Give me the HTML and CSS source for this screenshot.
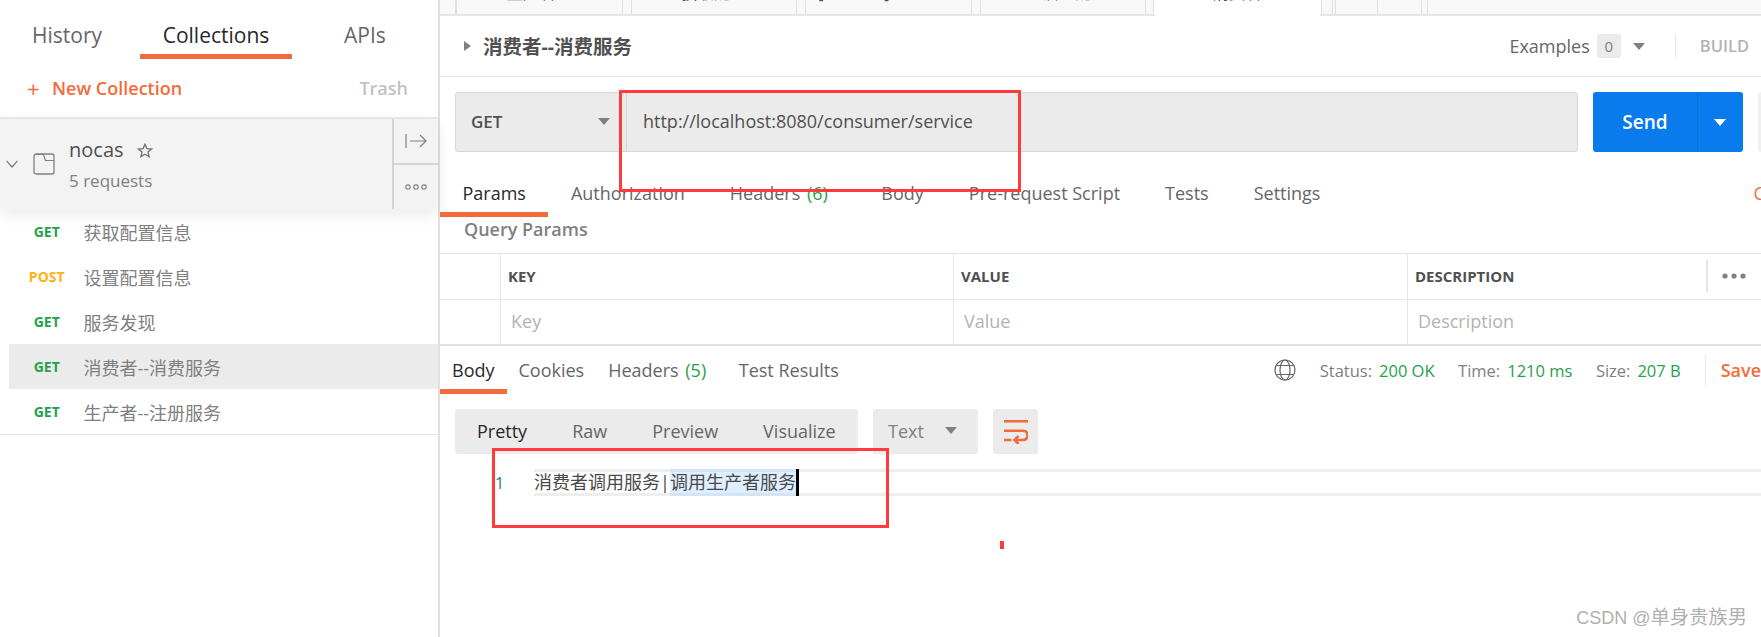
FILE: index.html
```html
<!DOCTYPE html>
<html lang="en">
<head>
    <meta charset="UTF-8">
    <title>Postman - nocas</title>
    <link rel="stylesheet" href="styles.css">
</head>
<body>
    <div class="app">
        <aside class="sidebar">
            <nav class="side-tabs">
                <a class="side-tab side-tab-history">History</a>
                <a class="side-tab side-tab-collections active">Collections</a>
                <a class="side-tab side-tab-apis">APIs</a>
            </nav>
            <div class="side-actions">
                <a class="new-collection"><span class="plus">+</span>New Collection</a>
                <a class="trash">Trash</a>
            </div>
            <div class="collection">
                <svg class="chevron" width="12" height="8" viewBox="0 0 12 8"><path d="M0.5 0.8 6 7 11.5 0.8" fill="none" stroke="#777" stroke-width="1.2"/></svg>
                <svg class="folder" width="22" height="22" viewBox="0 0 22 22"><rect x="1" y="1" width="20" height="20" rx="2" fill="none" stroke="#808080" stroke-width="1.3"/><path d="M3 1.5 10.5 1.5 12.5 7.5 21 7.5" fill="none" stroke="#808080" stroke-width="1.2"/></svg>
                <div class="collection-info">
                    <div class="collection-name">nocas
                        <svg class="star" width="16" height="15" viewBox="0 0 16 15"><path d="M8 1.2 9.9 5.6 14.6 6 11 9.1 12.1 13.7 8 11.3 3.9 13.7 5 9.1 1.4 6 6.1 5.6Z" fill="none" stroke="#707070" stroke-width="1.3"/></svg>
                    </div>
                    <div class="collection-count">5 requests</div>
                </div>
                <div class="collection-btns">
                    <div class="collection-btn">
                        <svg width="22" height="16" viewBox="0 0 22 16"><path d="M1 1V15M5 8H21M15 2 21 8 15 14" fill="none" stroke="#808080" stroke-width="1.2"/></svg>
                    </div>
                    <div class="collection-btn collection-btn-more">
                        <svg width="22" height="6" viewBox="0 0 22 6"><circle cx="3" cy="3" r="2.2" fill="none" stroke="#808080" stroke-width="1.2"/><circle cx="11" cy="3" r="2.2" fill="none" stroke="#808080" stroke-width="1.2"/><circle cx="19" cy="3" r="2.2" fill="none" stroke="#808080" stroke-width="1.2"/></svg>
                    </div>
                </div>
            </div>
            <ul class="requests">
                <li class="request"><span class="method get">GET</span><span class="request-name">获取配置信息</span></li>
                <li class="request"><span class="method post">POST</span><span class="request-name">设置配置信息</span></li>
                <li class="request"><span class="method get">GET</span><span class="request-name">服务发现</span></li>
                <li class="request selected"><span class="method get">GET</span><span class="request-name">消费者--消费服务</span></li>
                <li class="request"><span class="method get">GET</span><span class="request-name">生产者--注册服务</span></li>
            </ul>
        </aside>

        <main class="main">
            <div class="tab-strip">
                <div class="tab-stub"></div>
                <div class="req-tab req-tab-first"><span>生产者</span></div>
                <div class="req-tab"><span>获取配置</span></div>
                <div class="req-tab req-tab-third"><span>[CONFIG]</span></div>
                <div class="req-tab req-tab-fourth"><span>设置配置</span></div>
                <div class="req-tab req-tab-active"><span>消费者</span></div>
                <div class="tab-small"></div>
                <div class="tab-small tab-small-plus"></div>
                <div class="tab-small tab-small-dots"></div>
                <div class="tab-end"></div>
            </div>

            <div class="title-row">
                <span class="title-caret"></span>
                <h1 class="title">消费者--消费服务</h1>
                <div class="title-actions">
                    <span class="examples">Examples</span>
                    <span class="badge">0</span>
                    <span class="caret examples-caret"></span>
                    <span class="build">BUILD</span>
                </div>
            </div>

            <div class="url-row">
                <div class="url-bar">
                    <div class="url-method">GET<span class="caret"></span></div>
                    <div class="url-text">http://localhost:8080/consumer/service</div>
                </div>
                <div class="send">
                    <span class="send-label">Send</span>
                    <span class="send-more"><span class="caret caret-white"></span></span>
                </div>
                <div class="save-stub"></div>
            </div>

            <nav class="tabs req-tabs">
                <a class="tab active">Params</a>
                <a class="tab">Authorization</a>
                <a class="tab tab-headers">Headers <span class="count">(6)</span></a>
                <a class="tab">Body</a>
                <a class="tab">Pre-request Script</a>
                <a class="tab">Tests</a>
                <a class="tab">Settings</a>
                <a class="tab tab-cookies">Cookies</a>
            </nav>

            <div class="query-title">Query Params</div>

            <div class="params">
                <div class="cell cell-check"></div>
                <div class="cell cell-head">KEY</div>
                <div class="cell cell-head">VALUE</div>
                <div class="cell cell-head cell-desc">DESCRIPTION<span class="more-wrap">
                    <svg width="24" height="6" viewBox="0 0 24 6"><circle cx="3" cy="3" r="2.6" fill="#808080"/><circle cx="12" cy="3" r="2.6" fill="#808080"/><circle cx="21" cy="3" r="2.6" fill="#808080"/></svg>
                </span></div>
                <div class="cell cell-check cell-body"></div>
                <div class="cell cell-body cell-ph">Key</div>
                <div class="cell cell-body cell-ph">Value</div>
                <div class="cell cell-body cell-ph">Description</div>
            </div>

            <div class="tabs resp-tabs">
                <a class="tab active">Body</a>
                <a class="tab">Cookies</a>
                <a class="tab tab-headers">Headers <span class="count">(5)</span></a>
                <a class="tab">Test Results</a>
                <div class="resp-meta">
                    <svg class="globe" width="22" height="22" viewBox="0 0 22 22"><g fill="none" stroke="#666" stroke-width="1.2"><circle cx="11" cy="11" r="10"/><ellipse cx="11" cy="11" rx="5" ry="10"/><path d="M2.5 6.5H19.5M2.5 15.5H19.5"/></g></svg>
                    <span class="meta-label">Status:</span><span class="meta-value">200 OK</span>
                    <span class="meta-label">Time:</span><span class="meta-value">1210 ms</span>
                    <span class="meta-label">Size:</span><span class="meta-value meta-size">207 B</span>
                    <span class="save-response">Save</span>
                </div>
            </div>

            <div class="view-row">
                <div class="segments">
                    <a class="segment active">Pretty</a>
                    <a class="segment">Raw</a>
                    <a class="segment">Preview</a>
                    <a class="segment">Visualize</a>
                </div>
                <div class="type-select">Text<span class="caret"></span></div>
                <div class="wrap-btn">
                    <svg width="24" height="24" viewBox="0 0 24 24"><path d="M0 1.3H24M0 10.7H18.5Q23.5 10.7 23.5 15.3T18.5 20H10.5M0 20H7.5M14.5 16 10.5 20 14.5 24" fill="none" stroke="#f26b3a" stroke-width="2.5"/></svg>
                </div>
            </div>

            <div class="editor">
                <span class="line-no">1</span>
                <div class="code-line"><span class="code">消费者调用服务|</span><span class="code-selected">调用生产者服务</span><span class="cursor"></span></div>
            </div>

            <div class="watermark">CSDN @<span class="watermark-name">单身贵族男</span></div>
        </main>
    </div>

    <!-- annotations drawn over the screenshot -->
    <div class="mark mark-url"></div>
    <div class="mark mark-body"></div>
    <div class="mark-tick"></div>
</body>
</html>
```

FILE: styles.css
```css
* {
    margin: 0;
    padding: 0;
    box-sizing: border-box;
    font-family: "Open Sans", "Noto Sans CJK SC", sans-serif;
}
html, body {
    width: 1761px;
    height: 637px;
    overflow: hidden;
    background: #fff;
}
.app {
    display: flex;
    height: 637px;
}

/* sidebar */
.sidebar {
    width: 440px;
    flex: none;
    border-right: 2px solid #e0e0e0;
}
.side-tabs {
    display: flex;
    height: 59px;
}
.side-tab {
    font-size: 21px;
    color: #666;
    text-align: center;
    line-height: 30px;
    padding-top: 20px;
}
.side-tab-history {
    width: 134px;
    margin-right: 6px;
}
.side-tab-collections {
    width: 152px;
}
.side-tab-apis {
    width: 146px;
}
.side-tab.active {
    color: #282828;
    border-bottom: 5px solid #f26b3a;
}
.side-actions {
    display: flex;
    justify-content: space-between;
    align-items: center;
    height: 58px;
    padding: 0 30px 0 27px;
}
.new-collection {
    color: #f26b3a;
    font-size: 18px;
    font-weight: 600;
    display: flex;
    align-items: center;
}
.plus {
    width: 25px;
    font-size: 22px;
    font-weight: 400;
    line-height: 20px;
}
.trash {
    color: #c2c2c2;
    font-size: 18px;
    font-weight: 600;
}
.collection {
    display: flex;
    align-items: center;
    height: 92px;
    background: #f3f3f3;
    border-top: 2px solid #e6e6e6;
    box-shadow: 0 6px 14px rgba(0,0,0,0.08);
    position: relative;
}
.chevron {
    margin-left: 6px;
}
.folder {
    margin-left: 15px;
}
.collection-info {
    margin-left: 14px;
    flex: 1;
}
.collection-name {
    display: flex;
    align-items: center;
    font-size: 20px;
    color: #505050;
    line-height: 30px;
}
.star {
    margin-left: 13px;
}
.collection-count {
    font-size: 17px;
    color: #808080;
    line-height: 24px;
    margin-top: 4px;
}
.collection-btns {
    width: 46px;
    height: 90px;
    border-left: 2px solid #d4d4d4;
    display: flex;
    flex-direction: column;
}
.collection-btn {
    flex: 1;
    display: flex;
    align-items: center;
    justify-content: center;
}
.collection-btn-more {
    border-top: 2px solid #d4d4d4;
}
.requests {
    list-style: none;
    border-bottom: 1px solid #e6e6e6;
}
.request {
    display: flex;
    align-items: center;
    height: 45px;
    margin-left: 9px;
}
.request.selected {
    background: #ebebeb;
}
.method {
    width: 74.5px;
    padding-left: 1px;
    text-align: center;
    font-size: 14px;
    font-weight: 700;
}
.get {
    color: #26a14b;
}
.post {
    color: #fdb310;
}
.request-name {
    font-size: 18px;
    color: #808080;
}

/* main */
.main {
    flex: 1;
    min-width: 0;
    overflow: hidden;
    position: relative;
}
.tab-strip {
    display: flex;
    height: 16px;
    background: #f8f8f8;
    border-bottom: 2px solid #e6e6e6;
}
.tab-stub {
    width: 16px;
    border-right: 1px solid #e0e0e0;
}
.req-tab {
    width: 166.5px;
    height: 14px;
    margin-right: 8px;
    border-right: 1px solid #e0e0e0;
    border-left: 1px solid #e0e0e0;
    display: flex;
    justify-content: center;
    align-items: flex-end;
    padding-bottom: 11px;
    overflow: hidden;
    font-size: 16.5px;
    line-height: 20px;
    color: #505050;
}
.req-tab-first {
    padding-right: 16px;
}
.req-tab-third {
    justify-content: flex-start;
    padding-left: 12px;
}
.req-tab-fourth {
    padding-left: 24px;
}
.req-tab-active {
    height: 16px;
    background: #fff;
    border: 0;
    border-bottom-left-radius: 3px;
    border-bottom-right-radius: 3px;
    box-shadow: -1px 0 0 #e0e0e0, 1px 0 0 #e0e0e0;
    padding-bottom: 13px;
    margin-right: 11px;
}
.tab-small {
    width: 3px;
    height: 14px;
    border-left: 1px solid #e0e0e0;
}
.tab-small-plus {
    width: 42px;
}
.tab-small-dots {
    width: 44px;
}
.tab-end {
    width: 7px;
    height: 14px;
    border-left: 1px solid #e0e0e0;
    border-right: 1px solid #e0e0e0;
}
.caret {
    display: inline-block;
    width: 0;
    height: 0;
    border-left: 6px solid transparent;
    border-right: 6px solid transparent;
    border-top: 7px solid #808080;
}
.title-row {
    display: flex;
    align-items: center;
    height: 61px;
    padding: 0 12px 0 24px;
    border-bottom: 1px solid #e6e6e6;
}
.title-caret {
    width: 0;
    height: 0;
    border-top: 5.5px solid transparent;
    border-bottom: 5.5px solid transparent;
    border-left: 7px solid #808080;
}
.title {
    margin: 0 0 2px 12px;
    font-size: 19.5px;
    font-weight: 700;
    color: #505050;
}
.title-actions {
    margin-left: auto;
    display: flex;
    align-items: center;
    font-size: 18px;
    color: #666;
}
.badge {
    width: 24px;
    height: 24px;
    line-height: 24px;
    margin-left: 7px;
    text-align: center;
    background: #ebebeb;
    border-radius: 3px;
    color: #808080;
    font-size: 15px;
}
.examples-caret {
    margin-left: 12px;
    margin-right: 30px;
}
.build {
    border-left: 1px solid #e6e6e6;
    height: 24px;
    line-height: 24px;
    padding-left: 24px;
    font-size: 16.5px;
    font-weight: 600;
    color: #b3b3b3;
}
.url-row {
    display: flex;
    height: 60px;
    margin-top: 15px;
    padding-left: 15px;
}
.url-bar {
    display: flex;
    width: 1123px;
    flex: none;
    background: #ebebeb;
    border: 1px solid #d6d6d6;
    border-radius: 3px;
}
.url-method {
    width: 171px;
    display: flex;
    align-items: center;
    justify-content: space-between;
    padding: 0 16px 1px 15px;
    font-size: 17px;
    font-weight: 600;
    color: #505050;
    border-right: 1px solid #d6d6d6;
}
.url-text {
    padding: 13px 0 0 16px;
    line-height: 30px;
    font-size: 18px;
    color: #505050;
}
.send {
    display: flex;
    width: 150px;
    flex: none;
    margin-left: 15px;
    background: #097bed;
    border-radius: 3px;
    color: #fff;
}
.send-label {
    width: 104px;
    display: flex;
    align-items: center;
    justify-content: center;
    font-size: 19px;
    font-weight: 600;
}
.send-more {
    flex: 1;
    display: flex;
    align-items: center;
    justify-content: center;
    padding-right: 2px;
    border-left: 1px solid #0a6fd6;
}
.caret-white {
    border-top-color: #fff;
}
.save-stub {
    width: 40px;
    flex: none;
    margin-left: 15px;
    background: #f0f0f0;
    border-radius: 3px;
}
.tabs {
    display: flex;
}
.tab {
    font-size: 18px;
    color: #666;
    white-space: nowrap;
}
.tab.active {
    color: #282828;
    border-bottom: 5px solid #f26b3a;
}
.count {
    color: #26a14b;
    margin-left: 2px;
}
.req-tabs {
    margin-top: 20px;
    height: 45px;
}
.req-tabs .tab {
    padding: 7px 22.5px 0;
    line-height: 28px;
}
.tab-headers {
    margin-right: 8.5px;
}
.req-tabs .tab-cookies {
    margin-left: 388px;
    color: #f26b3a;
}
.query-title {
    height: 36px;
    line-height: 24px;
    padding-left: 24px;
    font-size: 18px;
    font-weight: 600;
    color: #808080;
}
.params {
    display: grid;
    grid-template-columns: 61px 453px 454px 1fr;
    grid-template-rows: 46px 45px;
    border-top: 1px solid #e6e6e6;
    border-bottom: 2px solid #e0e0e0;
    height: 93px;
}
.cell {
    display: flex;
    align-items: center;
    padding-left: 7px;
    border-right: 1px solid #e6e6e6;
    border-bottom: 1px solid #e6e6e6;
}
.cell-body {
    border-bottom: 0;
}
.cell-head {
    padding-bottom: 2px;
    font-size: 15px;
    font-weight: 700;
    color: #505050;
}
.cell-desc {
    border-right: 0;
}
.more-wrap {
    margin-left: 192px;
    height: 32px;
    display: flex;
    align-items: center;
    padding-left: 14px;
    border-left: 2px solid #e6e6e6;
}
.cell-ph {
    padding: 0 0 3px 10px;
    font-size: 18px;
    font-weight: 400;
    color: #b3b3b3;
    border-right: 1px solid #e6e6e6;
}
.cell-ph:last-child {
    border-right: 0;
}
.resp-tabs {
    height: 48px;
}
.resp-tabs .tab {
    padding: 10px 12px 0;
    line-height: 28px;
}
.resp-meta {
    margin-left: auto;
    display: flex;
    align-items: center;
    height: 48px;
    font-size: 16.5px;
}
.globe {
    margin-right: 24px;
}
.meta-label {
    color: #808080;
    margin-right: 7px;
}
.meta-value {
    color: #26a14b;
    margin-right: 23.5px;
}
.meta-value.meta-size {
    margin-right: 24px;
}
.save-response {
    border-left: 1px solid #e6e6e6;
    height: 30px;
    line-height: 30px;
    padding-left: 15px;
    color: #f26b3a;
    font-size: 18px;
    font-weight: 600;
}
.view-row {
    display: flex;
    margin-top: 15px;
    padding-left: 15px;
    height: 45px;
}
.segments {
    display: flex;
    align-items: center;
    width: 403px;
    padding: 0 0 2px 22px;
    background: #ebebeb;
    border-radius: 3px;
}
.segment {
    font-size: 18px;
    color: #666;
    margin-right: 45px;
}
.segment.active {
    color: #282828;
}
.type-select {
    display: flex;
    align-items: center;
    justify-content: space-between;
    width: 105px;
    margin-left: 15px;
    padding: 0 21px 2px 15px;
    background: #ebebeb;
    border-radius: 3px;
    font-size: 18px;
    color: #808080;
}
.wrap-btn {
    display: flex;
    align-items: center;
    justify-content: center;
    width: 45px;
    margin-left: 15px;
    background: #ebebeb;
    border-radius: 3px;
}
.editor {
    display: flex;
    align-items: center;
    height: 27px;
    margin-top: 15px;
}
.line-no {
    width: 94px;
    padding-left: 55px;
    font-size: 16px;
    color: #237893;
    flex: none;
}
.code-line {
    flex: 1;
    display: flex;
    align-items: center;
    height: 27px;
    border-top: 3px solid #eee;
    border-bottom: 3px solid #eee;
    font-size: 18px;
    color: #4a4a4a;
    white-space: pre;
}
.code {
    line-height: 21px;
    background: #fff;
}
.code-selected {
    height: 27px;
    line-height: 27px;
    background: rgba(173,214,255,0.38);
}
.cursor {
    width: 3px;
    height: 27px;
    background: #000;
}
.watermark {
    position: absolute;
    right: 14px;
    bottom: 7px;
    font-family: "Liberation Sans", "Noto Sans CJK SC", sans-serif;
    font-size: 18px;
    color: #b0b0b0;
}
.watermark-name {
    font-size: 19.3px;
}

/* annotations */
.mark {
    position: absolute;
    border: 3px solid #ff3b3b;
}
.mark-url {
    left: 619px;
    top: 90px;
    width: 402px;
    height: 102px;
}
.mark-body {
    left: 492px;
    top: 448px;
    width: 397px;
    height: 80px;
}
.mark-tick {
    position: absolute;
    left: 1000px;
    top: 541px;
    width: 4px;
    height: 8px;
    background: #ff3b3b;
}
```
